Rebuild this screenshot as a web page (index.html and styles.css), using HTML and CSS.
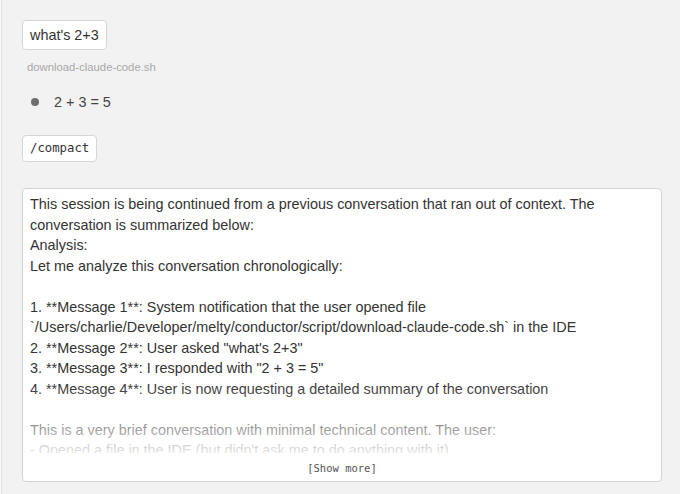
FILE: index.html
```html
<!DOCTYPE html>
<html>
<head>
<meta charset="utf-8">
<link rel="stylesheet" href="styles.css">
</head>
<body>
<div class="app">
  <div class="rail"></div>
  <main class="chat">
    <div class="user-msg">what's 2+3</div>
    <div class="file-ref">download-claude-code.sh</div>
    <div class="reply"><span class="dot"></span><span>2 + 3 = 5</span></div>
    <div class="user-msg mono">/compact</div>
    <div class="summary">
      <div class="summary-text">
        <p>This session is being continued from a previous conversation that ran out of context. The conversation is summarized below:</p>
        <p>Analysis:</p>
        <p>Let me analyze this conversation chronologically:</p>
        <p class="blank">&nbsp;</p>
        <p>1. **Message 1**: System notification that the user opened file `/Users/charlie/Developer/melty/conductor/script/download-claude-code.sh` in the IDE</p>
        <p>2. **Message 2**: User asked "what's 2+3"</p>
        <p>3. **Message 3**: I responded with "2 + 3 = 5"</p>
        <p>4. **Message 4**: User is now requesting a detailed summary of the conversation</p>
        <p class="blank">&nbsp;</p>
        <p>This is a very brief conversation with minimal technical content. The user:</p>
        <p>- Opened a file in the IDE (but didn't ask me to do anything with it)</p>
        <div class="fade"></div>
      </div>
      <div class="show-more">[Show more]</div>
    </div>
  </main>
</div>
</body>
</html>
```

FILE: styles.css
```css
html, body {
  margin: 0;
  padding: 0;
  height: 100%;
}
body {
  background: #f2f2f2;
  font-family: "Liberation Sans", Arial, sans-serif;
  color: #333;
  overflow: hidden;
}
.app {
  display: flex;
  height: 494px;
}
.rail {
  width: 1px;
  background: #fafafa;
  border-right: 1px solid #e2e2e2;
  flex: none;
}
.chat {
  flex: 1;
  padding: 20px 18px 0 20px;
  display: flex;
  flex-direction: column;
  align-items: flex-start;
}
.user-msg {
  box-sizing: border-box;
  background: #fff;
  border: 1px solid #d6d6d6;
  border-radius: 4px;
  padding: 0 7px;
  height: 30px;
  line-height: 28px;
  font-size: 14.4px;
  color: #333;
}
.user-msg.mono {
  font-family: "DejaVu Sans Mono", monospace;
  font-size: 12.3px;
  height: 27px;
  line-height: 25px;
  margin-top: 24px;
}
.file-ref {
  font-size: 11.3px;
  line-height: 13px;
  color: #a8a8a8;
  margin: 11px 0 0 5px;
}
.reply {
  display: flex;
  align-items: center;
  font-size: 14.4px;
  margin: 19px 0 0 9px;
  color: #444;
  height: 18px;
}
.dot {
  width: 8px;
  height: 8px;
  border-radius: 50%;
  background: #6e6e6e;
  margin-right: 15px;
}
.summary {
  box-sizing: border-box;
  align-self: stretch;
  margin-top: 26px;
  background: #fff;
  border: 1px solid #d3d3d3;
  border-radius: 4px;
  padding: 5px 7px 0 7px;
  height: 294px;
  display: flex;
  flex-direction: column;
}
.summary-text {
  position: relative;
  height: 259px;
  overflow: hidden;
  font-size: 14.4px;
  line-height: 20.5px;
  color: #333;
}
.summary-text p {
  margin: 0;
}
.fade {
  position: absolute;
  left: 0;
  right: 0;
  bottom: 0;
  height: 70px;
  background: linear-gradient(to bottom, rgba(255,255,255,0), rgba(255,255,255,0.5) 64%, rgba(255,255,255,0.88));
}
.show-more {
  text-align: center;
  font-family: "DejaVu Sans Mono", monospace;
  font-size: 10.5px;
  line-height: 14px;
  color: #555;
  margin-top: 8px;
}
```
